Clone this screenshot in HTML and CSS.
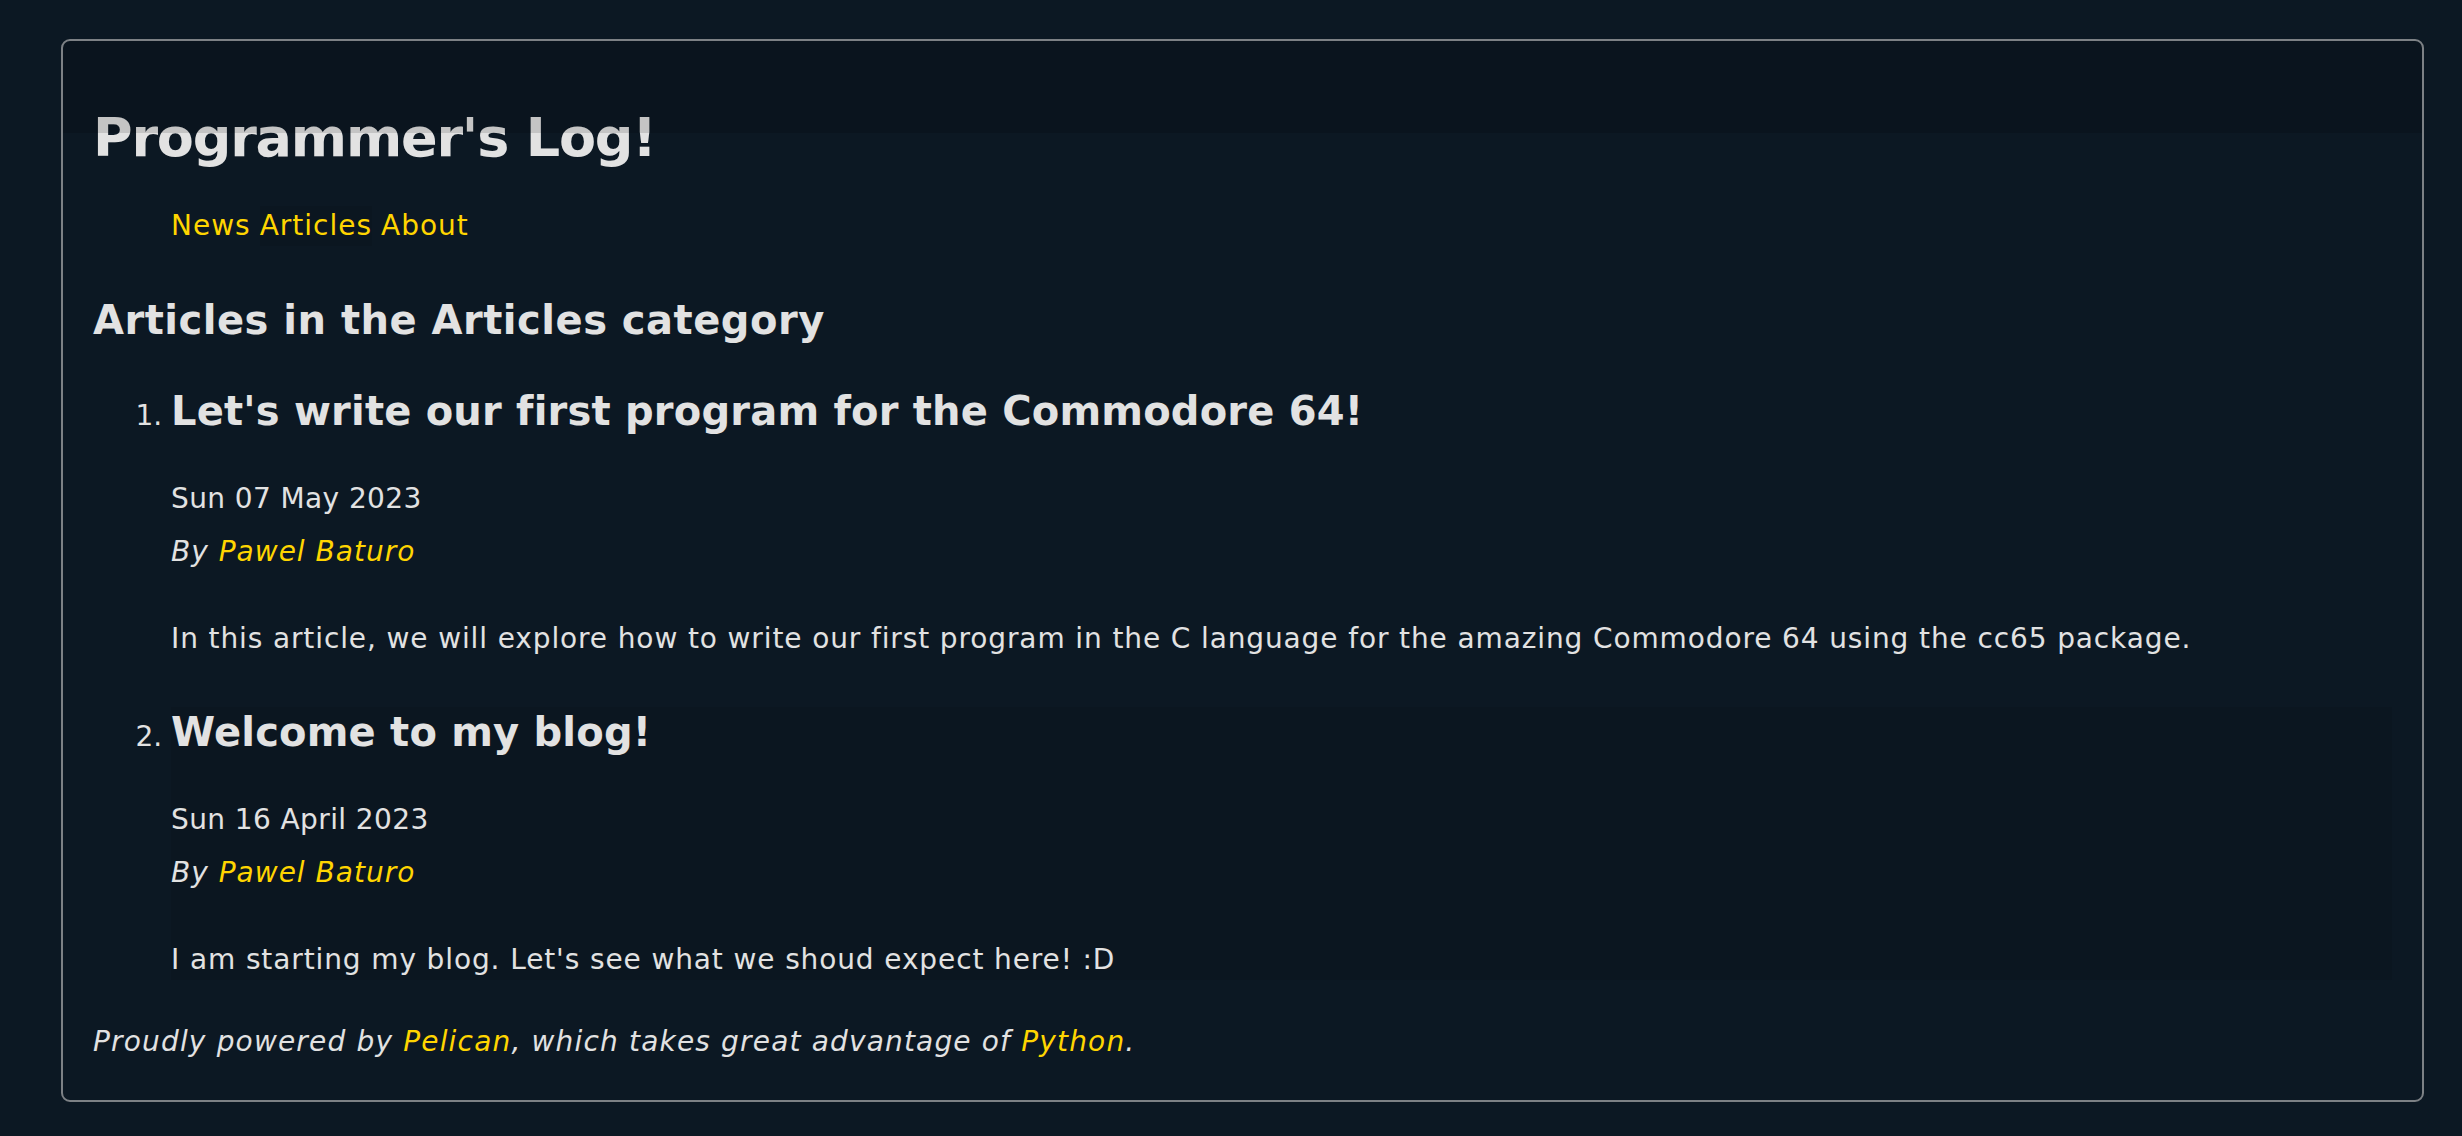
FILE: index.html
```html
<!DOCTYPE html>
<html lang="en">
<head>
<meta charset="utf-8">
<title>Programmer's Log! - Articles</title>
<link rel="stylesheet" href="styles.css">
</head>
<body>
<div class="page">
  <header class="site-header">
    <h1 class="site-title">Programmer's Log!</h1>
    <nav>
      <ul class="menu">
        <li><a href="#">News</a></li>
        <li class="current"><a href="#">Articles</a></li>
        <li><a href="#">About</a></li>
      </ul>
    </nav>
  </header>
  <main>
    <h2 class="category">Articles in the Articles category</h2>
    <ol class="articles">
      <li class="article">
        <h2 class="article-title">Let's write our first program for the Commodore 64!</h2>
        <div class="date">Sun 07 May 2023</div>
        <div class="byline">By <a href="#">Pawel Baturo</a></div>
        <p class="summary">In this article, we will explore how to write our first program in the C language for the amazing Commodore 64 using the cc65 package.</p>
      </li>
      <li class="article article-shaded">
        <h2 class="article-title">Welcome to my blog!</h2>
        <div class="date">Sun 16 April 2023</div>
        <div class="byline">By <a href="#">Pawel Baturo</a></div>
        <p class="summary">I am starting my blog. Let's see what we shoud expect here! :D</p>
      </li>
    </ol>
  </main>
  <footer class="site-footer">
    Proudly powered by <a href="#">Pelican</a>, which takes great advantage of <a href="#">Python</a>.
  </footer>
</div>
</body>
</html>
```
FILE: styles.css
```css
html, body {
  margin: 0;
  padding: 0;
  background: #0c1823;
}

body {
  padding: 39px 38px 34px 61px;
  font-family: "DejaVu Sans", "Liberation Sans", sans-serif;
  color: #e2e2e2;
  font-size: 28px;
  letter-spacing: 1px;
}

a {
  color: #ffd500;
  text-decoration: none;
}

.page {
  position: relative;
  border: 2px solid #7d8185;
  border-radius: 9px;
  padding: 65px 30px 38px 30px;
}

.page::before {
  content: "";
  position: absolute;
  left: 0;
  right: 0;
  top: 0;
  height: 92px;
  border-radius: 8px 8px 0 0;
  background: rgba(0, 0, 0, 0.13);
  pointer-events: none;
}

.site-title {
  margin: 0;
  font-size: 54px;
  line-height: 64px;
  font-weight: bold;
  letter-spacing: -1.2px;
}

.menu {
  list-style: none;
  margin: 36px 0 0 0;
  padding: 0 0 0 78px;
  display: flex;
  gap: 0.32em;
  line-height: 40px;
}

.menu .current {
  background: rgba(0, 0, 0, 0.06);
}

.category {
  margin: 49px 0 0 0;
  font-size: 40px;
  line-height: 50px;
  font-weight: bold;
  letter-spacing: 0.5px;
}

.articles {
  margin: 41px 0 0 0;
  padding: 0 0 0 78px;
}

.article {
  margin: 0;
}

.article + .article {
  margin-top: 48px;
}

.article::marker {
  font-size: 28px;
  font-weight: normal;
  letter-spacing: 0;
}

.article-title {
  margin: 0;
  font-size: 40px;
  line-height: 50px;
  font-weight: bold;
  letter-spacing: 0.2px;
}

.date {
  margin-top: 43px;
  line-height: 40px;
  letter-spacing: 0.4px;
}

.byline {
  margin-top: 13px;
  line-height: 40px;
  font-style: italic;
}

.summary {
  margin: 47px 0 0 0;
  line-height: 40px;
  letter-spacing: 0.88px;
}

.article-shaded {
  background: rgba(0, 0, 0, 0.08);
}

.site-footer {
  margin-top: 42px;
  line-height: 40px;
  font-style: italic;
  letter-spacing: 1.17px;
}
```
